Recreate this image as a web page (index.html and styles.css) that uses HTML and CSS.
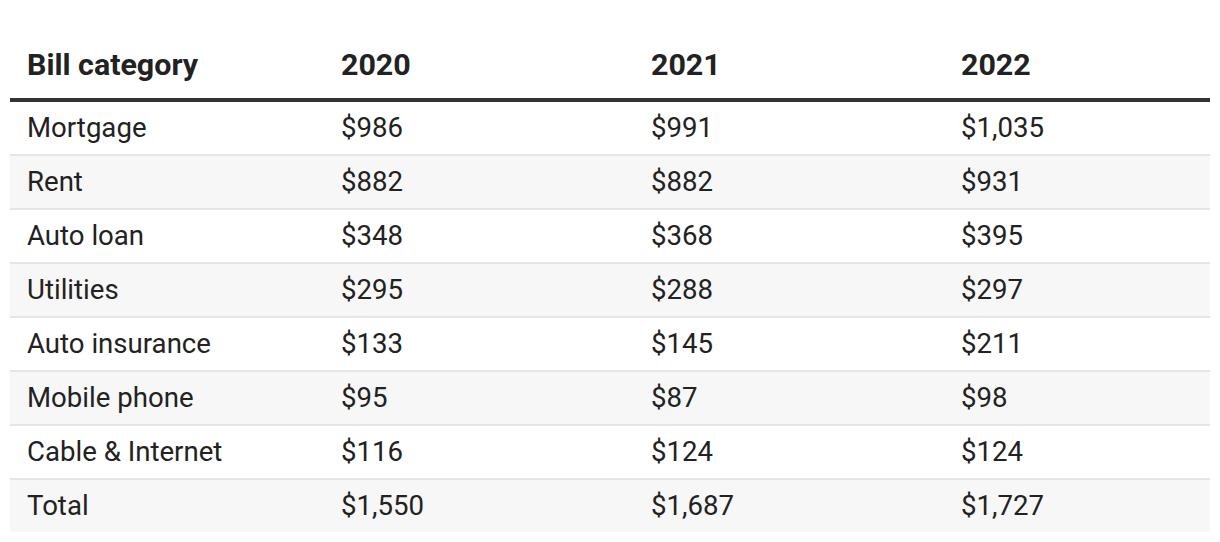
FILE: index.html
```html
<!DOCTYPE html>
<html lang="en">
<head>
<meta charset="utf-8">
<title>Bills</title>
<link rel="stylesheet" href="styles.css">
</head>
<body>
<table class="bills">
  <colgroup>
    <col class="c1"><col class="c2"><col class="c3"><col class="c4">
  </colgroup>
  <thead>
    <tr><th>Bill category</th><th>2020</th><th>2021</th><th>2022</th></tr>
  </thead>
  <tbody>
    <tr><td>Mortgage</td><td>$986</td><td>$991</td><td>$1,035</td></tr>
    <tr><td>Rent</td><td>$882</td><td>$882</td><td>$931</td></tr>
    <tr><td>Auto loan</td><td>$348</td><td>$368</td><td>$395</td></tr>
    <tr><td>Utilities</td><td>$295</td><td>$288</td><td>$297</td></tr>
    <tr><td>Auto insurance</td><td>$133</td><td>$145</td><td>$211</td></tr>
    <tr><td>Mobile phone</td><td>$95</td><td>$87</td><td>$98</td></tr>
    <tr><td>Cable &amp; Internet</td><td>$116</td><td>$124</td><td>$124</td></tr>
    <tr><td>Total</td><td>$1,550</td><td>$1,687</td><td>$1,727</td></tr>
  </tbody>
</table>
</body>
</html>
```

FILE: styles.css
```css
html, body {
  margin: 0;
  padding: 0;
  background: #ffffff;
}
body {
  font-family: Roboto, "Liberation Sans", sans-serif;
  color: #222222;
}
.bills {
  margin: 32px 10px 0 10px;
  width: 1200px;
  border-collapse: collapse;
  table-layout: fixed;
}
.c1 { width: 314px; }
.c2 { width: 310px; }
.c3 { width: 310px; }
.c4 { width: 266px; }
.bills th {
  text-align: left;
  font-weight: 700;
  font-size: 30.4px;
  line-height: 36px;
  height: 68px;
  padding: 0 0 0 17px;
  border-bottom: 4px solid #333333;
  box-sizing: border-box;
}
.bills td {
  font-size: 27.6px;
  line-height: 32px;
  height: 52px;
  padding: 0 0 0 17px;
  vertical-align: middle;
}
.bills tbody tr + tr td {
  border-top: 2px solid #e6e6e6;
}
.bills tbody tr:nth-child(even) td {
  background: #f7f7f7;
}
```
